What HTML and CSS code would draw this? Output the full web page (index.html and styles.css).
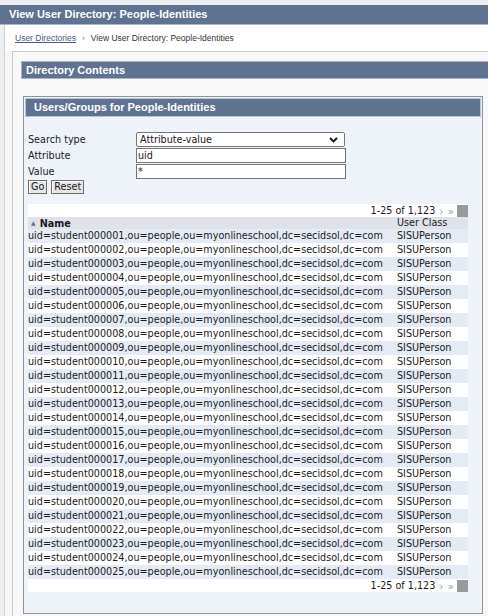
FILE: index.html
```html
<!DOCTYPE html>
<html>
<head>
<meta charset="utf-8">
<title>View User Directory</title>
<link rel="stylesheet" href="styles.css">
</head>
<body>
<div class="topbar">View User Directory: People-Identities</div>
<div class="main">
  <div class="crumbs"><a href="#" class="crumb-link">User Directories</a><span class="sep">›</span><span>View User Directory: People-Identities</span></div>
  <div class="panel">
    <div class="bar">Directory Contents</div>
    <div class="box">
      <div class="boxbar">Users/Groups for People-Identities</div>
      <div class="boxbody">
        <div class="form">
          <label class="lbl">Search type</label>
          <div class="select"><span>Attribute-value</span><svg class="chev" width="9" height="6" viewBox="0 0 9 6"><path d="M1 1 L4.5 4.5 L8 1" fill="none" stroke="#111" stroke-width="1.8"/></svg></div>
          <label class="lbl">Attribute</label>
          <div class="input">uid</div>
          <label class="lbl">Value</label>
          <div class="input">*</div>
        </div>
        <div class="buttons"><span class="btn">Go</span><span class="btn">Reset</span></div>
        <div class="table">
          <div class="pager"><span>1-25 of 1,123</span><span class="arr">›</span><span class="arr">»</span><span class="sq"></span></div>
          <div class="row head"><span class="c1"><span class="tri">▲</span>Name</span><span class="c2">User Class</span></div>
          <div class="row"><span class="c1">uid=student000001,ou=people,ou=myonlineschool,dc=secidsol,dc=com</span><span class="c2">SISUPerson</span></div>
          <div class="row"><span class="c1">uid=student000002,ou=people,ou=myonlineschool,dc=secidsol,dc=com</span><span class="c2">SISUPerson</span></div>
          <div class="row"><span class="c1">uid=student000003,ou=people,ou=myonlineschool,dc=secidsol,dc=com</span><span class="c2">SISUPerson</span></div>
          <div class="row"><span class="c1">uid=student000004,ou=people,ou=myonlineschool,dc=secidsol,dc=com</span><span class="c2">SISUPerson</span></div>
          <div class="row"><span class="c1">uid=student000005,ou=people,ou=myonlineschool,dc=secidsol,dc=com</span><span class="c2">SISUPerson</span></div>
          <div class="row"><span class="c1">uid=student000006,ou=people,ou=myonlineschool,dc=secidsol,dc=com</span><span class="c2">SISUPerson</span></div>
          <div class="row"><span class="c1">uid=student000007,ou=people,ou=myonlineschool,dc=secidsol,dc=com</span><span class="c2">SISUPerson</span></div>
          <div class="row"><span class="c1">uid=student000008,ou=people,ou=myonlineschool,dc=secidsol,dc=com</span><span class="c2">SISUPerson</span></div>
          <div class="row"><span class="c1">uid=student000009,ou=people,ou=myonlineschool,dc=secidsol,dc=com</span><span class="c2">SISUPerson</span></div>
          <div class="row"><span class="c1">uid=student000010,ou=people,ou=myonlineschool,dc=secidsol,dc=com</span><span class="c2">SISUPerson</span></div>
          <div class="row"><span class="c1">uid=student000011,ou=people,ou=myonlineschool,dc=secidsol,dc=com</span><span class="c2">SISUPerson</span></div>
          <div class="row"><span class="c1">uid=student000012,ou=people,ou=myonlineschool,dc=secidsol,dc=com</span><span class="c2">SISUPerson</span></div>
          <div class="row"><span class="c1">uid=student000013,ou=people,ou=myonlineschool,dc=secidsol,dc=com</span><span class="c2">SISUPerson</span></div>
          <div class="row"><span class="c1">uid=student000014,ou=people,ou=myonlineschool,dc=secidsol,dc=com</span><span class="c2">SISUPerson</span></div>
          <div class="row"><span class="c1">uid=student000015,ou=people,ou=myonlineschool,dc=secidsol,dc=com</span><span class="c2">SISUPerson</span></div>
          <div class="row"><span class="c1">uid=student000016,ou=people,ou=myonlineschool,dc=secidsol,dc=com</span><span class="c2">SISUPerson</span></div>
          <div class="row"><span class="c1">uid=student000017,ou=people,ou=myonlineschool,dc=secidsol,dc=com</span><span class="c2">SISUPerson</span></div>
          <div class="row"><span class="c1">uid=student000018,ou=people,ou=myonlineschool,dc=secidsol,dc=com</span><span class="c2">SISUPerson</span></div>
          <div class="row"><span class="c1">uid=student000019,ou=people,ou=myonlineschool,dc=secidsol,dc=com</span><span class="c2">SISUPerson</span></div>
          <div class="row"><span class="c1">uid=student000020,ou=people,ou=myonlineschool,dc=secidsol,dc=com</span><span class="c2">SISUPerson</span></div>
          <div class="row"><span class="c1">uid=student000021,ou=people,ou=myonlineschool,dc=secidsol,dc=com</span><span class="c2">SISUPerson</span></div>
          <div class="row"><span class="c1">uid=student000022,ou=people,ou=myonlineschool,dc=secidsol,dc=com</span><span class="c2">SISUPerson</span></div>
          <div class="row"><span class="c1">uid=student000023,ou=people,ou=myonlineschool,dc=secidsol,dc=com</span><span class="c2">SISUPerson</span></div>
          <div class="row"><span class="c1">uid=student000024,ou=people,ou=myonlineschool,dc=secidsol,dc=com</span><span class="c2">SISUPerson</span></div>
          <div class="row"><span class="c1">uid=student000025,ou=people,ou=myonlineschool,dc=secidsol,dc=com</span><span class="c2">SISUPerson</span></div>
          <div class="pager"><span>1-25 of 1,123</span><span class="arr">›</span><span class="arr">»</span><span class="sq"></span></div>
        </div>
      </div>
    </div>
  </div>
</div>
</body>
</html>
```
FILE: styles.css
```css
html, body {
  margin: 0;
  padding: 0;
  overflow: hidden;
}
body {
  background: #eceef1;
  padding-top: 5px;
  font-family: "DejaVu Sans", Verdana, sans-serif;
  font-size: 9.65px;
  color: #1a1a1a;
}
.topbar {
  height: 19px;
  line-height: 19px;
  background: #5f7290;
  border-bottom: 1px solid #aab5c6;
  color: #fff;
  font-family: "Liberation Sans", Arial, sans-serif;
  font-weight: bold;
  font-size: 11px;
  padding-left: 9px;
}
.main {
  margin-left: 4px;
  border-left: 1px solid #cfd2d6;
  background: #f6f6f6;
  padding-left: 7px;
}
.crumbs {
  margin-left: -7px;
  padding: 7px 0 7px 10px;
  height: 12px;
  line-height: 12px;
  background: #fff;
  font-family: "Liberation Sans", Arial, sans-serif;
  font-size: 8.5px;
  color: #333;
}
.crumb-link {
  color: #4a5a78;
  text-decoration: underline;
}
.sep {
  color: #777;
  margin: 0 6px;
}
.panel {
  border-top: 1px solid #c9c9c9;
  border-left: 1px solid #c9c9c9;
  background: #f8f8f8;
  padding: 9px 0 4px 8px;
}
.bar {
  height: 16px;
  line-height: 16px;
  background: #5f7290;
  border: 1px solid #aab5c6;
  border-right: none;
  color: #fff;
  font-family: "Liberation Sans", Arial, sans-serif;
  font-weight: bold;
  font-size: 11px;
  padding-left: 4px;
}
.box {
  margin: 17px 5px 0 2px;
  border: 1px solid #8e949c;
  background: #eef3fa;
  padding: 1px;
}
.boxbar {
  height: 17px;
  line-height: 17px;
  background: #5f7290;
  border: 1px solid #b8c3d3;
  color: #fff;
  font-family: "Liberation Sans", Arial, sans-serif;
  font-weight: bold;
  font-size: 11px;
  padding-left: 8px;
}
.boxbody {
  padding: 15px 12px 20px 3px;
}
.form {
  display: grid;
  grid-template-columns: 108px 210px;
  row-gap: 1px;
  align-items: center;
}
.lbl {
  line-height: 15px;
}
.select {
  height: 13px;
  border: 1px solid #767676;
  border-radius: 2px;
  background: #fff;
  display: flex;
  align-items: center;
  justify-content: space-between;
  padding: 0 6px 0 3px;
  box-sizing: content-box;
  margin-right: -3px;
  width: 198px;
}
.chev {
  display: block;
}
.input {
  height: 13px;
  line-height: 13px;
  border: 1px solid #767676;
  background: #fff;
  padding-left: 1px;
}
.buttons {
  display: flex;
  gap: 4px;
  margin-top: 1px;
}
.btn {
  display: block;
  height: 12px;
  line-height: 12px;
  padding: 0 2px;
  border: 1px solid #6e6e6e;
  background: #e6e6e6;
  box-shadow: inset 1px 1px 0 #fff;
}
.table {
  margin-top: 10px;
  width: 440px;
}
.pager {
  height: 13px;
  background: #fff;
  display: flex;
  justify-content: flex-end;
  align-items: center;
  gap: 4px;
}
.arr {
  color: #8e9aa8;
  font-size: 10.5px;
}
.sq {
  width: 11px;
  height: 12px;
  background: #9a9a9a;
  margin-left: -1px;
}
.row {
  display: grid;
  grid-template-columns: 369px 71px;
  height: 14px;
  line-height: 14px;
  white-space: nowrap;
  background: #fff;
}
.row:nth-child(odd) {
  background: #e5ebf4;
}
.row.head {
  height: 12px;
  line-height: 12px;
  background: #dfe3e9;
}
.head .c1 {
  font-weight: bold;
}
.tri {
  font-size: 6px;
  color: #5f7290;
  margin: 0 4px 0 3px;
  vertical-align: 2px;
}
```
